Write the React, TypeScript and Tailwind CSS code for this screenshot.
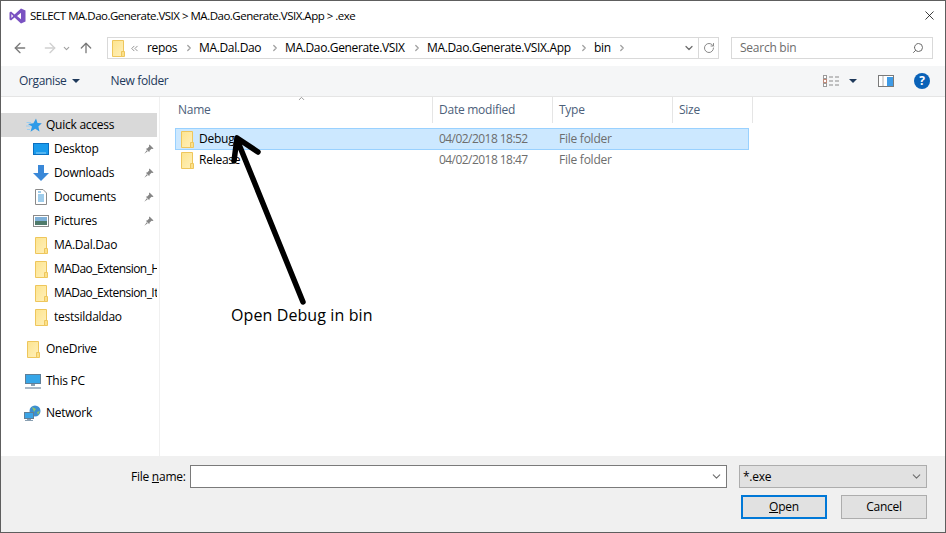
import { ArrowLeft, ArrowRight, ArrowUp, ChevronDown, ChevronRight, ChevronsLeft, RotateCw, Search, X } from "lucide-react";

function VsLogo() {
  return (
    <svg width="17" height="16" viewBox="0 0 17 16">
      <path d="M12 0.5 L16.5 2.5 V13.5 L12 15.5 L5.5 9.6 L2 12.4 L0.5 11.6 V4.4 L2 3.6 L5.5 6.4 Z M12 4.8 L8 8 L12 11.2 Z M2.4 6 V10 L4.2 8 Z" fill="#7a52c2" fillRule="evenodd" />
    </svg>
  );
}

function Folder() {
  return (
    <svg width="13" height="17" viewBox="0 0 13 17" className="shrink-0">
      <defs>
        <linearGradient id="fold" x1="0" y1="0" x2="1" y2="1">
          <stop offset="0" stopColor="#fde48e" />
          <stop offset="1" stopColor="#fff0bb" />
        </linearGradient>
      </defs>
      <path d="M0.5 0.5 H11.5 V16.5 H0.5 Z" fill="url(#fold)" stroke="#eec65c" />
      <path d="M9.5 16.5 V11.5 H12.5 V16.5 Z" fill="#fbe08a" stroke="#eec65c" />
    </svg>
  );
}

function StarIcon() {
  return (
    <svg width="16" height="15" viewBox="0 0 16 15">
      <path d="M10 0.5 L11.5 5 L15.8 5.3 L12.4 8.4 L13.5 13.5 L9.2 10.8 L4.5 13.8 L6 8.6 L2 6 L7.4 5.2 Z" fill="#2f9be8" />
      <path d="M0.5 4.5 H5 M0 8 H4 M1 11.5 H4" stroke="#9ccdf0" strokeWidth="1" />
    </svg>
  );
}

function DesktopIcon() {
  return (
    <svg width="16" height="12" viewBox="0 0 16 12">
      <rect x="0.5" y="0.5" width="15" height="11" fill="#1a9bec" stroke="#0a6fc0" />
      <path d="M3 10 H13" stroke="#8fd0f6" />
    </svg>
  );
}

function DownloadIcon() {
  return (
    <svg width="16" height="16" viewBox="0 0 16 16">
      <path d="M5 0 H11 V8 H16 L8 16 L0 8 H5 Z" fill="#3a88d8" />
    </svg>
  );
}

function DocumentsIcon() {
  return (
    <svg width="12" height="16" viewBox="0 0 12 16" className="mr-[2px]">
      <path d="M0.5 0.5 H8 L11.5 4 V15.5 H0.5 Z" fill="#fff" stroke="#8a8a8a" />
      <path d="M3 3 H6 M3 6 H9 M3 8 H9 M3 10 H9 M3 12 H9" stroke="#3f9ad8" />
    </svg>
  );
}

function PicturesIcon() {
  return (
    <svg width="16" height="12" viewBox="0 0 16 12">
      <rect x="0.5" y="0.5" width="15" height="11" fill="#fff" stroke="#8a8a8a" />
      <rect x="2" y="2" width="12" height="4" fill="#7fb0d8" />
      <rect x="2" y="6" width="12" height="4" fill="#4f7a6a" />
    </svg>
  );
}

function PinIcon() {
  return (
    <svg width="10" height="10" viewBox="0 0 10 10" className="ml-[1px]">
      <path d="M5.5 0.5 L9.5 4.5 L8.5 5 L7.5 4.8 L5.5 6.8 L5.3 8.3 L1.8 4.8 L3.2 4.4 L5.2 2.5 L5 1.2 Z M2.8 6.3 L0.3 9.7 L3.7 7.2 Z" fill="#858585" />
    </svg>
  );
}

function PcIcon() {
  return (
    <svg width="16" height="15" viewBox="0 0 16 15">
      <rect x="0.5" y="0.5" width="15" height="9" fill="#36a6e8" stroke="#5f7f98" />
      <rect x="6" y="10" width="4" height="2" fill="#8aa0b2" />
      <rect x="0" y="13" width="16" height="2" fill="#a9b8c6" />
    </svg>
  );
}

function NetworkIcon() {
  return (
    <svg width="17" height="16" viewBox="0 0 17 16">
      <circle cx="11" cy="6" r="5.5" fill="#3c8fd0" />
      <path d="M8 2 L12 4 L10 7 Z M13 7 L16 6 L14 10 Z" fill="#8fc26a" />
      <rect x="0.5" y="7.5" width="9" height="6" fill="#3aa4e6" stroke="#5f7f98" />
      <rect x="3" y="14" width="4" height="1" fill="#8aa0b2" />
      <rect x="1" y="15" width="8" height="1" fill="#8aa0b2" />
    </svg>
  );
}

function ViewIcon() {
  return (
    <svg width="17" height="13" viewBox="0 0 17 13">
      <rect x="0.5" y="0.5" width="3" height="3" fill="#fff" stroke="#9a9a9a" />
      <rect x="0.5" y="4.5" width="3" height="3" fill="#fff" stroke="#c08a7a" />
      <rect x="0.5" y="8.5" width="3" height="3" fill="#fff" stroke="#9a9a9a" />
      <path d="M6 2 H10 M12 2 H16 M6 6 H10 M12 6 H16 M6 10 H10 M12 10 H16" stroke="#8a8a8a" />
    </svg>
  );
}

function PaneIcon() {
  return (
    <svg width="16" height="12" viewBox="0 0 16 12">
      <rect x="0.5" y="0.5" width="15" height="11" fill="#fff" stroke="#7a7a7a" />
      <rect x="9" y="2" width="6" height="9" fill="#3f9be6" />
      <path d="M5 1 V11" stroke="#b0b0b0" />
    </svg>
  );
}

function HelpIcon() {
  return (
    <div className="flex h-4 w-4 items-center justify-center rounded-full bg-[#0a62b8] text-[12px] font-bold leading-none text-white">
      ?
    </div>
  );
}

function Triangle() {
  return <div className="h-0 w-0 border-x-[4px] border-t-[4px] border-x-transparent border-t-[#1e395b]" />;
}

const crumbs = [
  { label: "repos", w: "w-[52px]" },
  { label: "MA.Dal.Dao", w: "w-[86px]" },
  { label: "MA.Dao.Generate.VSIX", w: "w-[142px]" },
  { label: "MA.Dao.Generate.VSIX.App", w: "w-[167px]" },
  { label: "bin", w: "w-[38px]" },
];

const pinned = [
  { label: "Desktop", icon: <DesktopIcon /> },
  { label: "Downloads", icon: <DownloadIcon /> },
  { label: "Documents", icon: <DocumentsIcon /> },
  { label: "Pictures", icon: <PicturesIcon /> },
];

const folders = ["MA.Dal.Dao", "MADao_Extension_Host", "MADao_Extension_Item", "testsildaldao"];

function NavSub({ label, icon, pin }: { label: string; icon: React.ReactNode; pin?: boolean }) {
  return (
    <div className="flex h-6 items-center">
      <div className="flex w-[53px] shrink-0 justify-end pr-[5px]">{icon}</div>
      <span className={`overflow-hidden whitespace-nowrap ${pin ? "w-[89px]" : "w-[103px]"} ${label.length > 15 ? "tracking-[-0.55px]" : ""}`}>
        {label}
      </span>
      {pin && <PinIcon />}
    </div>
  );
}

function NavTop({ label, icon, className }: { label: string; icon: React.ReactNode; className?: string }) {
  return (
    <div className={`flex h-6 items-center ${className ?? ""}`}>
      <div className="flex w-[45px] shrink-0 justify-end pr-[5px]">{icon}</div>
      <span className="whitespace-nowrap">{label}</span>
    </div>
  );
}

export default function App() {
  return (
    <div className="flex h-[533px] w-[946px] flex-col overflow-hidden border border-[#5e5e5e] bg-white font-['Open_Sans',sans-serif] text-[12px] tracking-[-0.25px] text-black">
      {/* title bar */}
      <div className="flex h-[29px] shrink-0 items-center pl-[8px] pr-[8px]">
        <VsLogo />
        <span className="ml-[4px] text-[11.5px] tracking-[-0.5px]">SELECT MA.Dao.Generate.VSIX &gt; MA.Dao.Generate.VSIX.App &gt; .exe</span>
        <X size={15} strokeWidth={1.2} className="ml-auto text-black" />
      </div>

      {/* address row */}
      <div className="flex h-[36px] shrink-0 items-center">
        <div className="flex w-[106px] shrink-0 items-center pl-[11px]">
          <ArrowLeft size={16} className="text-[#7a7a7a]" />
          <ArrowRight size={16} className="ml-[14px] text-[#d0d0d0]" />
          <ChevronDown size={9} strokeWidth={3} className="ml-[4px] text-[#a0a0a0]" />
          <ArrowUp size={16} className="ml-[7px] text-[#7a7a7a]" />
        </div>
        <div className="flex h-[22px] w-[612px] shrink-0 items-center border border-[#d9d9d9] pl-[4px]">
          <Folder />
          <ChevronsLeft size={11} className="ml-[4px] text-[#8a8a8a]" />
          <div className="ml-[7px] flex items-center tracking-[-0.35px]">
            {crumbs.map((c) => (
              <div key={c.label} className={`flex items-center justify-between pr-[5px] ${c.w}`}>
                <span className="whitespace-nowrap">{c.label}</span>
                <ChevronRight size={10} strokeWidth={3} className="text-[#a0a0a0]" />
              </div>
            ))}
          </div>
          <div className="ml-auto flex h-full items-center">
            <ChevronDown size={12} strokeWidth={2.5} className="mr-[3px] text-[#6d6d6d]" />
            <div className="flex h-full w-[20px] items-center justify-center border-l border-[#d9d9d9]">
              <RotateCw size={12} className="text-[#8a8a8a]" />
            </div>
          </div>
        </div>
        <div className="ml-[12px] flex h-[22px] w-[202px] shrink-0 items-center justify-between border border-[#d9d9d9] pl-[8px] pr-[8px] text-[#6d6d6d]">
          <span>Search bin</span>
          <Search size={12} className="-scale-x-100 text-[#6d6d6d]" />
        </div>
      </div>

      {/* toolbar */}
      <div className="flex h-[31px] shrink-0 items-center border-b border-[#e5e5e5] bg-[#f5f6f7] pl-[18px] tracking-[-0.35px] text-[#1e395b]">
        <span>Organise</span>
        <div className="ml-[6px]">
          <Triangle />
        </div>
        <span className="ml-[30px]">New folder</span>
        <div className="ml-auto flex items-center pr-[15px]">
          <ViewIcon />
          <div className="ml-[9px]">
            <Triangle />
          </div>
          <div className="ml-[21px]">
            <PaneIcon />
          </div>
          <div className="ml-[20px]">
            <HelpIcon />
          </div>
        </div>
      </div>

      {/* main area */}
      <div className="relative flex min-h-0 flex-1">
        <nav className="w-[159px] shrink-0 border-r border-[#f0f0f0] pt-[16px]">
          <div className="mr-[2px] flex h-6 items-center bg-[#d9d9d9]">
            <div className="flex w-[45px] shrink-0 justify-end pr-[4px]">
              <StarIcon />
            </div>
            <span>Quick access</span>
          </div>
          {pinned.map((p) => (
            <NavSub key={p.label} label={p.label} icon={p.icon} pin />
          ))}
          {folders.map((f) => (
            <NavSub key={f} label={f} icon={<div className="mr-[1px]"><Folder /></div>} />
          ))}
          <NavTop label="OneDrive" icon={<div className="mr-[1px]"><Folder /></div>} className="mt-[8px]" />
          <NavTop label="This PC" icon={<PcIcon />} className="mt-[8px]" />
          <NavTop label="Network" icon={<NetworkIcon />} className="mt-[8px]" />
        </nav>

        <div className="flex-1 pl-[15px]">
          <div className="relative flex h-[26px] items-center text-[#4c607a]">
            <ChevronDown size={9} className="absolute left-[122px] top-[-3px] rotate-180 text-[#7a7a7a]" />
            <div className="flex h-full w-[258px] items-center border-r border-[#e5e5e5] pl-[3px]">Name</div>
            <div className="flex h-full w-[120px] items-center border-r border-[#e5e5e5] pl-[6px]">Date modified</div>
            <div className="flex h-full w-[120px] items-center border-r border-[#e5e5e5] pl-[6px]">Type</div>
            <div className="flex h-full w-[80px] items-center border-r border-[#e5e5e5] pl-[6px]">Size</div>
          </div>
          <div className="mt-[5px] flex h-[22px] w-[574px] items-center border border-[#99d1ff] bg-[#cce8ff]">
            <div className="ml-[5px] mr-[5px]">
              <Folder />
            </div>
            <span className="w-[240px]">Debug</span>
            <span className="w-[120px] tracking-[-0.55px] text-[#6d6d6d]">04/02/2018 18:52</span>
            <span className="text-[#6d6d6d]">File folder</span>
          </div>
          <div className="flex h-[20px] w-[574px] items-center border border-transparent">
            <div className="ml-[5px] mr-[5px]">
              <Folder />
            </div>
            <span className="w-[240px]">Release</span>
            <span className="w-[120px] tracking-[-0.55px] text-[#6d6d6d]">04/02/2018 18:47</span>
            <span className="text-[#6d6d6d]">File folder</span>
          </div>
        </div>

        {/* annotation drawn over the dialog */}
        <svg width="90" height="180" viewBox="0 0 90 180" className="absolute left-[225px] top-[35px]" fill="none" stroke="#000" strokeWidth="5.5" strokeLinecap="round">
          <path d="M77 170 L12 10 M11 6 L32 20 M11 6 L8 29" />
        </svg>
        <span className="absolute left-[230px] top-[207px] text-[16px] leading-[22px] tracking-[0.1px]">Open Debug in bin</span>
      </div>

      {/* footer */}
      <div className="h-[76px] shrink-0 bg-[#f0f0f0] pt-[9px]">
        <div className="flex h-[23px] items-center">
          <span className="ml-[130px] w-[59px]">
            File <span className="underline">n</span>ame:
          </span>
          <div className="flex h-[23px] w-[537px] items-center justify-end border border-[#7a7a7a] bg-white pr-[3px]">
            <ChevronDown size={13} className="text-[#6d6d6d]" />
          </div>
          <div className="ml-[12px] flex h-[23px] w-[188px] items-center justify-between border border-[#adadad] bg-[#e1e1e1] pl-[3px] pr-[3px]">
            <span>*.exe</span>
            <ChevronDown size={13} className="text-[#6d6d6d]" />
          </div>
        </div>
        <div className="mt-[7px] flex justify-end pr-[18px]">
          <button className="h-[24px] w-[86px] border-2 border-[#0078d7] bg-[#e1e1e1]">
            <span className="underline">O</span>pen
          </button>
          <button className="ml-[14px] h-[24px] w-[86px] border border-[#adadad] bg-[#e1e1e1]">Cancel</button>
        </div>
      </div>
    </div>
  );
}
